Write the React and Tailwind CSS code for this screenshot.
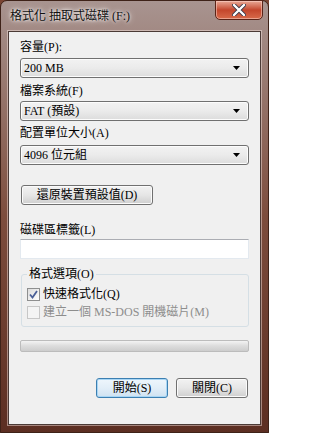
import React from 'react';

const font = "font-['Liberation_Serif','Noto_Sans_CJK_TC',serif] text-[12px] leading-[14px] text-black";

function Arrow() {
  return (
    <svg width="7" height="4" viewBox="0 0 7 4" className="shrink-0">
      <path d="M0 0H7L3.5 4Z" fill="#000" />
    </svg>
  );
}

// combo box with the Win7 grey gradient
function Combo({ value }) {
  return (
    <div className="h-[20px] w-[229px] rounded-[3px] border border-[#707070] bg-gradient-to-b from-[#f2f2f2] via-[#ebebeb] to-[#dcdcdc] shadow-[inset_0_0_0_1px_#fcfcfc] flex items-center justify-between pl-[3px] pr-[8px]">
      <span>{value}</span>
      <Arrow />
    </div>
  );
}

function Button({ children, primary, className = '' }) {
  const look = primary
    ? 'border-[#3c7fb1] bg-gradient-to-b from-[#eef6fc] via-[#e2eef8] to-[#cfe2f1] shadow-[inset_0_0_0_1px_#a8d6f5]'
    : 'border-[#707070] bg-gradient-to-b from-[#f2f2f2] via-[#e6e6e6] to-[#cfcfcf] shadow-[inset_0_0_0_1px_#fbfbfb]';
  return (
    <div className={`h-[20px] rounded-[3px] border flex items-center justify-center ${look} ${className}`}>
      {children}
    </div>
  );
}

function Checkbox({ checked, disabled }) {
  return (
    <div className={`w-[13px] h-[13px] border flex items-center justify-center shrink-0 ${disabled ? 'border-[#c7c7c7] bg-[#f4f4f4]' : 'border-[#8e8f8f] bg-gradient-to-br from-[#dcdcdc] to-[#ffffff]'}`}>
      {checked && (
        <svg width="9" height="9" viewBox="0 0 9 9">
          <path d="M1 4.5L3.5 7.5L8 1" fill="none" stroke="#4a5f97" strokeWidth="1.8" />
        </svg>
      )}
    </div>
  );
}

export default function App() {
  return (
    <div className={`w-[269px] h-[433px] overflow-hidden bg-[#7a4432] ${font}`}>
      <div className="w-full h-full rounded-t-[7px] border border-[#3e2218] bg-gradient-to-b from-[#a89490] via-[#7d4d3d] to-[#5c2e22] flex flex-col relative">
        {/* title bar */}
        <div className="h-[30px] flex items-center pl-[9px] shrink-0">
          <span className="[text-shadow:0_0_6px_#fff,0_0_3px_#fff] text-[#111]">格式化 抽取式磁碟 (F:)</span>
        </div>
        <div className="absolute top-[-1px] right-[5px] w-[48px] h-[20px] rounded-b-[5px] border border-[#5a2418] bg-gradient-to-b from-[#e8a896] via-[#c4462c] to-[#d86a4a] shadow-[inset_0_0_0_1px_rgba(255,220,210,0.5)] flex items-center justify-center">
          <svg width="14" height="12" viewBox="0 0 14 12">
            <path d="M2 1L12 11M12 1L2 11" stroke="#3a3a4a" strokeWidth="4" strokeLinecap="round" />
            <path d="M2 1L12 11M12 1L2 11" stroke="#fff" strokeWidth="2.4" strokeLinecap="round" />
          </svg>
        </div>

        {/* client area */}
        <div className="mx-[7px] h-[394px] border border-[#4b3a36] bg-[#f0f0f0] shadow-[0_0_0_1px_rgba(255,240,235,0.45)] flex flex-col pl-[11px] pt-[8px]">
          <div>容量(P):</div>
          <div className="mt-[4px]"><Combo value="200 MB" /></div>

          <div className="mt-[6px]">檔案系統(F)</div>
          <div className="mt-[3px]"><Combo value="FAT (預設)" /></div>

          <div className="mt-[5px]">配置單位大小(A)</div>
          <div className="mt-[5px]"><Combo value="4096 位元組" /></div>

          <Button className="mt-[20px] ml-[1px] w-[132px]">還原裝置預設值(D)</Button>

          <div className="mt-[18px]">磁碟區標籤(L)</div>
          <div className="mt-[2px] h-[20px] w-[229px] border border-[#e3e9ef] border-t-[#abadb3] bg-white" />

          {/* options group */}
          <div className="relative mt-[15px] ml-[1px] w-[228px] h-[53px] rounded-[3px] border border-[#d5dfe5] pl-[5px] pt-[10px] flex flex-col">
            <span className="absolute top-[-8px] left-[5px] px-[2px] bg-[#f0f0f0]">格式選項(O)</span>
            <div className="h-[18px] flex items-center gap-[3px]">
              <Checkbox checked />
              <span>快速格式化(Q)</span>
            </div>
            <div className="h-[18px] flex items-center gap-[3px] text-[#8d8d8d]">
              <Checkbox disabled />
              <span>建立一個 MS-DOS 開機磁片(M)</span>
            </div>
          </div>

          <div className="mt-[13px] w-[229px] h-[12px] rounded-[2px] border border-[#bcbcbc] bg-gradient-to-b from-[#f3f3f3] via-[#dcdcdc] to-[#cdcdcd]" />

          <div className="mt-[26px] w-[229px] flex justify-end gap-[8px] pr-[1px]">
            <Button primary className="w-[72px]">開始(S)</Button>
            <Button className="w-[72px]">關閉(C)</Button>
          </div>
        </div>
      </div>
    </div>
  );
}
